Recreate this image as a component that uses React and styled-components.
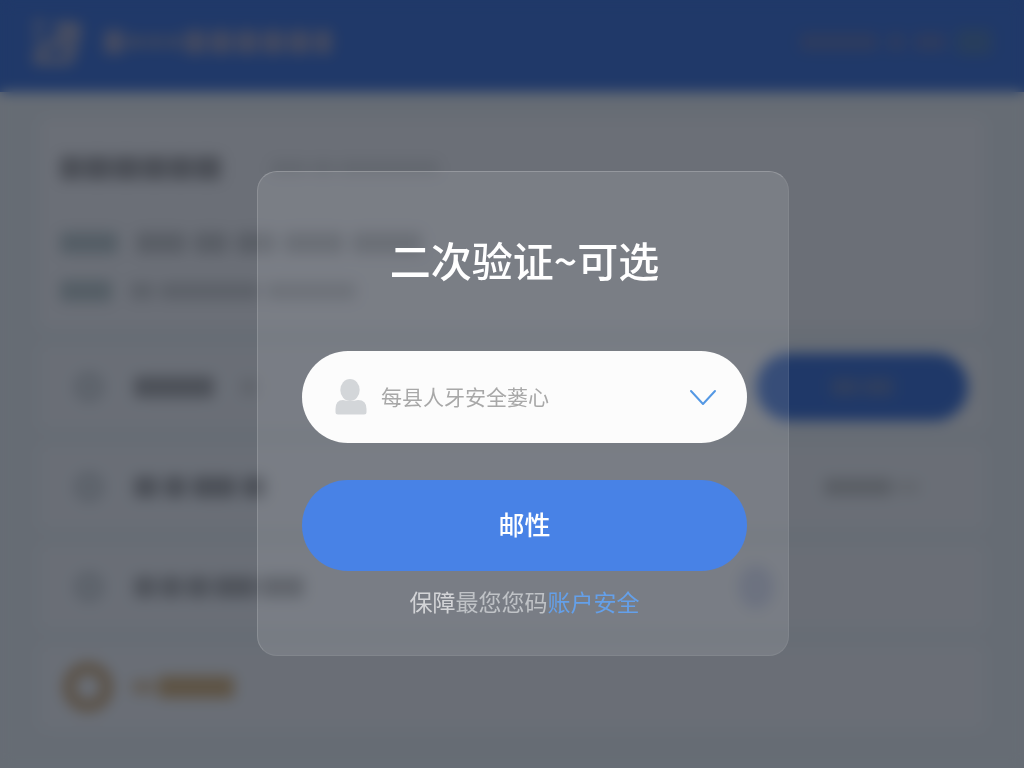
import React from "react";
import styled, { createGlobalStyle } from "styled-components";

const GlobalStyle = createGlobalStyle`
  * { box-sizing: border-box; }
  body {
    margin: 0;
    background: #b9c1c9;
    font-family: "Noto Sans CJK SC", "Noto Sans", sans-serif;
  }
`;

const Page = styled.div`
  min-height: 100vh;
  overflow: hidden;
`;

const TopBar = styled.header`
  display: flex;
  align-items: center;
  gap: 20px;
  height: 92px;
  padding: 0 32px 8px;
  background: #2c5ab2;
`;

const Spacer = styled.div`
  flex: 1;
`;

const Words = styled.div`
  display: flex;
  align-items: center;
  gap: ${(p) => p.$gap || 4}px;
`;

const Bar = styled.span`
  flex: none;
  width: ${(p) => p.$w}px;
  height: ${(p) => p.$h || 20}px;
  border-radius: 4px;
  background: ${(p) => p.$c};
`;

const Main = styled.main`
  display: flex;
  flex-direction: column;
  gap: 16px;
  padding: 26px 40px 32px;
`;

const Card = styled.section`
  display: flex;
  flex-direction: column;
  gap: 26px;
  height: 211px;
  padding: 38px 20px;
  border-radius: 8px;
  background: #c2c6ce;
`;

const CardHead = styled.div`
  display: flex;
  align-items: center;
  gap: 50px;
  margin-bottom: 26px;
`;

const Row = styled.section`
  display: flex;
  align-items: center;
  gap: 30px;
  height: 84px;
  padding: 0 16px 0 34px;
  border-radius: 8px;
  background: #c0c5cd;
`;

const Ring = styled.span`
  width: 30px;
  height: 30px;
  border: 6px solid #9ea6af;
  border-radius: 50%;
  background: #b0b6bd;
`;

const Coin = styled.span`
  width: 50px;
  height: 50px;
  margin-left: -11px;
  margin-right: -11px;
  border: 12px solid #a08868;
  border-radius: 50%;
`;

const Pill = styled.div`
  display: flex;
  align-items: center;
  justify-content: center;
  width: 212px;
  height: 68px;
  border-radius: 34px;
  background: #2b59b0;
`;

const Dot = styled.span`
  width: 36px;
  height: 44px;
  margin-right: 194px;
  border-radius: 50%;
  background: #a4acc2;
`;

const Scrim = styled.div`
  position: fixed;
  inset: 0;
  display: grid;
  place-items: center;
  padding: 59px 0 0 22px;
  overflow: auto;
  background: rgba(20, 24, 32, 0.5);
  backdrop-filter: blur(7px);
`;

const Dialog = styled.form`
  display: flex;
  flex-direction: column;
  width: 100%;
  max-width: 532px;
  padding: 57px 41px 38px 44px;
  border: 1px solid rgba(255, 255, 255, 0.06);
  border-top-color: rgba(255, 255, 255, 0.2);
  border-left-color: rgba(255, 255, 255, 0.14);
  border-radius: 20px;
  background: rgba(255, 255, 255, 0.11);
`;

const Title = styled.h1`
  margin: 0 0 62px;
  color: #fff;
  font-size: 41px;
  font-weight: 500;
  line-height: 60px;
  text-align: center;
`;

const Field = styled.label`
  display: flex;
  align-items: center;
  gap: 14px;
  height: 92px;
  padding: 0 30px 0 33px;
  border-radius: 46px;
  background: #fcfcfc;
`;

const Choice = styled.select`
  flex: 1;
  min-width: 0;
  height: 48px;
  padding: 0 0 2px;
  border: 0;
  outline: 0;
  appearance: none;
  background: transparent;
  color: #a8a8a8;
  font-family: inherit;
  font-size: 21px;
  font-weight: 400;
`;

const Submit = styled.button`
  height: 91px;
  margin-top: 37px;
  padding: 0 0 4px;
  border: 0;
  border-radius: 46px;
  background: #4882e6;
  color: #fff;
  font-family: inherit;
  font-size: 26px;
  font-weight: 500;
`;

const Note = styled.p`
  margin: 14px 0 0;
  color: #d3d4d7;
  font-size: 23px;
  line-height: 32px;
  text-align: center;
`;

const NoteLink = styled.a`
  color: #64a0ea;
  text-decoration: none;
`;

const Faint = styled.span`
  color: #bfc2c6;
`;

function UserIcon() {
  return (
    <svg width="32" height="36" viewBox="0 0 32 36" fill="#d3d6d9" aria-hidden="true">
      <ellipse cx="15" cy="11" rx="9.700" ry="11" />
      <path d="M8 21 Q15 23 23 21 Q31.500 21 31.500 30 V33 Q31.500 35.500 29 35.500 H3 Q0.500 35.500 0.500 33 V30 Q0.500 21 8 21Z" />
    </svg>
  );
}

function Chevron() {
  return (
    <svg width="28" height="18" viewBox="0 0 28 18" fill="none" stroke="#5498e4" strokeWidth="2" strokeLinecap="round" strokeLinejoin="round" aria-hidden="true">
      <path d="M2 3 L14 16 L26 3" />
    </svg>
  );
}

function Logo() {
  return (
    <svg width="52" height="48" viewBox="0 0 52 48" fill="none" stroke="#8589a3" strokeWidth="8" aria-hidden="true">
      <path d="M2 6 H12 M22 8 H48 M2 38 L42 10 M2 20 H10 M46 10 L38 42 M2 43 H40 M26 28 H44" />
    </svg>
  );
}

const bars = (widths, color, height) =>
  widths.map((w, i) => <Bar key={i} $w={w} $h={height} $c={color} />);

function Background() {
  return (
    <Page aria-hidden="true">
      <TopBar>
        <Logo />
        <Words>
          {bars([20], "#777fa4", 24)}
          {bars([16, 14, 14], "#62739f", 14)}
          {bars([22, 22, 22, 22, 22, 18], "#6f7aa2", 24)}
        </Words>
        <Spacer />
        <Words $gap={10}>
          {bars([78, 16, 32], "#465f9e", 18)}
          {bars([36], "#3c639a", 26)}
        </Words>
      </TopBar>
      <Main>
        <Card>
          <CardHead>
            <Words $gap={2}>{bars([22, 27, 27, 25, 23, 27], "#84878e", 24)}</Words>
            <Words>{bars([36, 24, 100], "#b0b5bc", 14)}</Words>
          </CardHead>
          <Words $gap={18}>
            {bars([58], "#95a3ab", 22)}
            <Words $gap={8}>{bars([50, 34, 40, 60, 70], "#a0a5ac", 22)}</Words>
          </Words>
          <Words $gap={18}>
            {bars([52], "#96a4ab", 22)}
            <Words $gap={6}>{bars([24, 100, 90], "#a6abb2", 18)}</Words>
          </Words>
        </Card>
        <Row>
          <Ring />
          <Words $gap={26}>
            {bars([80], "#868a91", 22)}
            {bars([18], "#aeb2b8", 18)}
          </Words>
          <Spacer />
          <Pill>
            <Words>{bars([28, 30], "#4a659e", 18)}</Words>
          </Pill>
        </Row>
        <Row>
          <Ring />
          <Words $gap={6}>{bars([24, 22, 44, 24], "#858990", 22)}</Words>
          <Spacer />
          <Words>
            {bars([68], "#a0a4a9", 18)}
            {bars([24], "#b2b6bb", 14)}
            <Bar $w={44} $h={10} $c="transparent" />
          </Words>
        </Row>
        <Row>
          <Ring />
          <Words>{bars([22, 22, 24, 42, 44], "#8d9198", 22)}</Words>
          <Spacer />
          <Dot />
        </Row>
        <Row>
          <Coin />
          <Words>
            {bars([22], "#afa08b", 14)}
            {bars([76], "#a78e68", 22)}
          </Words>
        </Row>
      </Main>
    </Page>
  );
}

export default function App() {
  return (
    <>
      <GlobalStyle />
      <Background />
      <Scrim>
        <Dialog role="dialog" aria-labelledby="dialog-title" onSubmit={(e) => e.preventDefault()}>
          <Title id="dialog-title">二次验证~可选</Title>
          <Field>
            <UserIcon />
            <Choice aria-label="验证方式">
              <option>每县人牙安全蒌心</option>
            </Choice>
            <Chevron />
          </Field>
          <Submit type="submit">邮性</Submit>
          <Note>
            保障<Faint>最您您码</Faint>
            <NoteLink href="#security">账户安全</NoteLink>
          </Note>
        </Dialog>
      </Scrim>
    </>
  );
}
